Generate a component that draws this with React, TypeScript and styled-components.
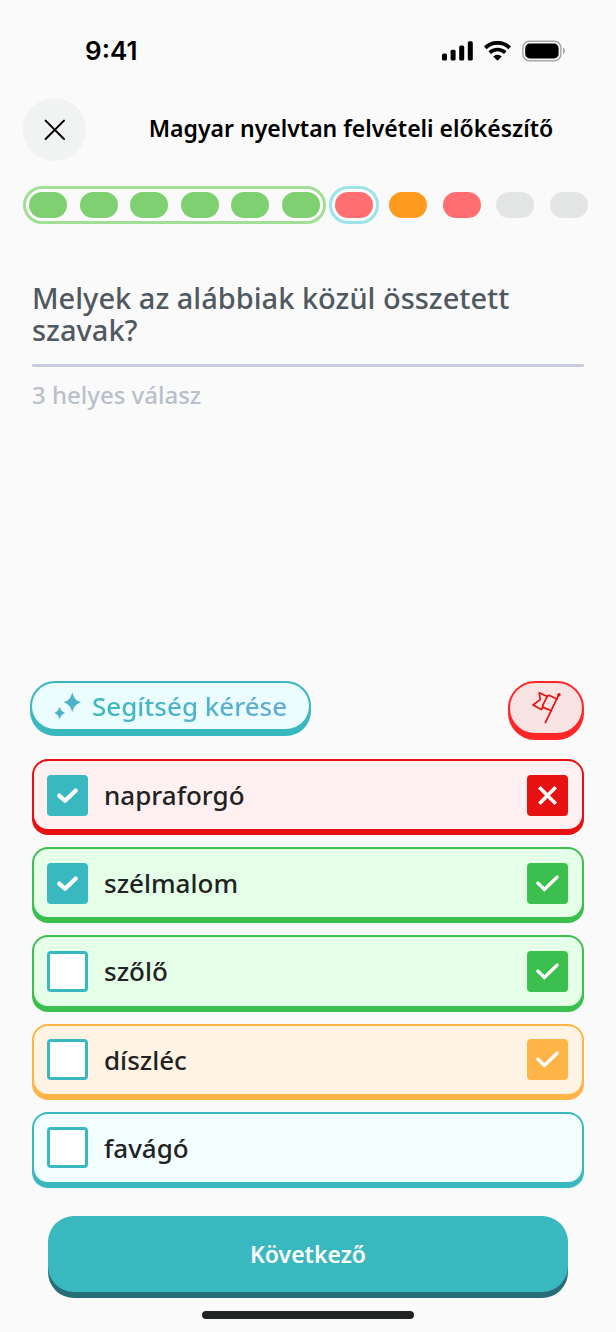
import React, { useState } from "react";
import styled, { createGlobalStyle } from "styled-components";

const GlobalStyle = createGlobalStyle`
  * { box-sizing: border-box; }
  body {
    margin: 0;
    background: #fafafa;
    color: #222;
    font-family: "Noto Sans", "Open Sans", sans-serif;
  }
  button, input { font: inherit; margin: 0; }
`;

const Screen = styled.div`
  min-height: 100vh;
  display: flex;
  flex-direction: column;
`;

const StatusBar = styled.div`
  display: flex;
  align-items: center;
  justify-content: space-between;
  height: 98px;
  padding: 4px 50px 0 85px;
`;

const Clock = styled.time`
  font-family: Inter, sans-serif;
  font-size: 26px;
  line-height: 32px;
  font-weight: 600;
  color: #000;
`;

const StatusIcons = styled.div`
  display: flex;
  align-items: center;
  gap: 11px;
`;

const Header = styled.header`
  display: flex;
  align-items: center;
  padding-left: 23px;
`;

const CloseButton = styled.button`
  display: grid;
  place-items: center;
  flex: none;
  width: 63px;
  height: 63px;
  padding: 0;
  border: 0;
  border-radius: 50%;
  background: #f0f3f2;
  color: #000;
`;

const Title = styled.h1`
  flex: 1;
  margin: 0;
  padding-bottom: 4px;
  text-align: center;
  font-size: 23px;
  line-height: 32px;
  font-weight: 600;
  color: #000;
`;

const Progress = styled.div`
  display: flex;
  align-items: center;
  padding: 25px 28px 0 23px;
`;

const PillGroup = styled.div<{ $grow: number; $gap: number; $ring?: string }>`
  display: flex;
  justify-content: space-between;
  flex: ${(p) => (p.$grow ? `${p.$grow} 1 0` : "none")};
  margin-left: ${(p) => p.$gap}px;
  padding: ${(p) => (p.$ring ? "3px" : "0")};
  border: ${(p) => (p.$ring ? `3px solid ${p.$ring}` : "0")};
  border-radius: 19px;
`;

const Pill = styled.span<{ $color: string }>`
  width: 38px;
  height: 26px;
  border-radius: 13px;
  background: ${(p) => p.$color};
`;

const Question = styled.section`
  flex: 1;
  padding: 58px 32px 24px;
`;

const QuestionText = styled.h2`
  margin: 0;
  padding-bottom: 18px;
  font-size: 29px;
  line-height: 32px;
  font-weight: 500;
  color: #505860;
`;

const Divider = styled.hr`
  height: 3px;
  margin: 0;
  border: 0;
  border-radius: 2px;
  background: #c8ccdc;
`;

const Hint = styled.p`
  margin: 12px 0 0;
  font-size: 24px;
  line-height: 32px;
  font-weight: 500;
  color: #b9c0cc;
`;

const Tools = styled.div`
  display: flex;
  align-items: flex-start;
  justify-content: space-between;
  padding: 0 32px 0 30px;
`;

const HelpButton = styled.button`
  display: flex;
  align-items: center;
  gap: 8px;
  height: 50px;
  margin-bottom: 5px;
  padding: 0 22px;
  border: 2px solid #3ab8c0;
  border-radius: 25px;
  background: #ebfdff;
  box-shadow: 0 5px 0 #3ab8c0;
  font-size: 26px;
  line-height: 32px;
  font-weight: 500;
`;

const HelpLabel = styled.span`
  background: linear-gradient(90deg, #3bb9c0, #66aad8);
  background-clip: text;
  -webkit-background-clip: text;
  color: transparent;
`;

const FlagButton = styled.button`
  display: grid;
  place-items: center;
  width: 76px;
  height: 54px;
  margin-bottom: 5px;
  padding: 0;
  border: 2px solid #ff2628;
  border-radius: 27px;
  background: #f7e3e2;
  box-shadow: 0 5px 0 #ff2628;
`;

const Options = styled.div`
  display: grid;
  grid-auto-rows: 1fr;
  gap: 16px;
  min-height: 425px;
  margin: 19px 32px 0;
`;

const OptionRow = styled.label<{ $edge: string; $fill: string }>`
  display: flex;
  align-items: center;
  gap: 16px;
  padding: 0 14px 0 13px;
  border: 2px solid ${(p) => p.$edge};
  border-radius: 16px;
  background: ${(p) => p.$fill};
  box-shadow: 0 4px 0 ${(p) => p.$edge};
`;

const OptionText = styled.span`
  flex: 1;
  font-size: 26px;
  line-height: 32px;
  font-weight: 500;
`;

const Box = styled.span`
  display: grid;
  flex: none;
  > * { grid-area: 1 / 1; }
  svg { pointer-events: none; }
`;

const Tick = styled.input`
  appearance: none;
  width: 41px;
  height: 41px;
  border: 3px solid #3ab8c0;
  border-radius: 4px;
  background: #fff;
  &:checked { background: #3ab8c0; }
`;

const Mark = styled.span<{ $color: string }>`
  display: block;
  width: 41px;
  height: 41px;
  border-radius: 4px;
  background: ${(p) => p.$color};
`;

const Footer = styled.footer`
  display: flex;
  flex-direction: column;
  align-items: center;
  gap: 19px;
  padding: 32px 48px 13px;
`;

const NextButton = styled.button`
  width: 100%;
  height: 76px;
  border: 0;
  border-radius: 26px;
  background: #3ab8c0;
  box-shadow: 0 6px 0 #276d77;
  color: #fff;
  font-size: 23px;
  line-height: 32px;
  font-weight: 600;
`;

const HomeIndicator = styled.div`
  width: 212px;
  height: 8px;
  border-radius: 4px;
  background: #222423;
`;

type Result = "wrong" | "right" | "missed" | "none";

const palette: Record<Result, { edge: string; fill: string }> = {
  wrong: { edge: "#e81111", fill: "#fff1f1" },
  right: { edge: "#3bbf4e", fill: "#e5ffe8" },
  missed: { edge: "#ffb447", fill: "#fff4e3" },
  none: { edge: "#3ab8c0", fill: "#f2feff" },
};

const answers: { text: string; checked: boolean; result: Result }[] = [
  { text: "napraforgó", checked: true, result: "wrong" },
  { text: "szélmalom", checked: true, result: "right" },
  { text: "szőlő", checked: false, result: "right" },
  { text: "díszléc", checked: false, result: "missed" },
  { text: "favágó", checked: false, result: "none" },
];

function ResultMark({ result }: { result: Result }) {
  if (result === "none") return null;
  return (
    <Mark $color={palette[result].edge}>
      <svg width="41" height="41" viewBox="0 0 41 41" fill="none" stroke="#fff" aria-hidden="true">
        {result === "wrong" ? (
          <path d="M12.3 12.3 28.7 28.7M28.7 12.3 12.3 28.7" strokeWidth="3.6" />
        ) : (
          <path d="M10.8 20 17.4 26.5 30.2 14" strokeWidth="3.2" strokeLinecap="round" />
        )}
      </svg>
    </Mark>
  );
}

function Option({ text, checked, result }: (typeof answers)[number]) {
  const [on, setOn] = useState(checked);
  return (
    <OptionRow $edge={palette[result].edge} $fill={palette[result].fill}>
      <Box>
        <Tick type="checkbox" checked={on} onChange={() => setOn(!on)} />
        {on && (
          <svg width="41" height="41" viewBox="0 0 41 41" fill="none" stroke="#fff" aria-hidden="true">
            <path d="M12.2 20.6 18 25.8 28.8 15.4" strokeWidth="4.2" strokeLinecap="round" strokeLinejoin="round" />
          </svg>
        )}
      </Box>
      <OptionText>{text}</OptionText>
      <ResultMark result={result} />
    </OptionRow>
  );
}

export default function App() {
  return (
    <Screen>
      <GlobalStyle />
      <StatusBar>
        <Clock>9:41</Clock>
        <StatusIcons>
          <svg width="31" height="20" viewBox="0 0 31 20" aria-hidden="true">
            <rect x="0" y="12.5" width="5" height="7" rx="1.6" />
            <rect x="8.6" y="8.7" width="5" height="10.8" rx="1.6" />
            <rect x="17.2" y="4.5" width="5" height="15" rx="1.6" />
            <rect x="25.8" y="0.3" width="5" height="19.2" rx="1.6" />
          </svg>
          <svg width="27" height="20" viewBox="0 0 27 20" fill="none" stroke="#000" aria-hidden="true">
            <path d="M1.3 6.8A17.4 17.4 0 0 1 25.7 6.8" strokeWidth="3.8" />
            <path d="M5.7 11.6A11.2 11.2 0 0 1 21.3 11.6" strokeWidth="3.6" />
            <path d="M13.5 19.8 9.2 15.5A6.2 6.2 0 0 1 17.8 15.5Z" fill="#000" stroke="none" />
          </svg>
          <svg width="44" height="22" viewBox="0 0 44 22" aria-hidden="true">
            <rect x="0.9" y="1.2" width="38" height="19.6" rx="6.5" fill="none" stroke="#a8a8a8" strokeWidth="1.5" />
            <rect x="3.2" y="3.6" width="33.4" height="14.8" rx="4.4" />
            <path d="M41 7.8C43.6 9 43.6 13 41 14.2Z" fill="#a8a8a8" />
          </svg>
        </StatusIcons>
      </StatusBar>

      <Header>
        <CloseButton aria-label="Bezárás">
          <svg width="22" height="22" viewBox="0 0 22 22" stroke="#000" strokeWidth="2" strokeLinecap="round" aria-hidden="true">
            <path d="M1.6 1.6 20 20M20 1.6 1.6 20" />
          </svg>
        </CloseButton>
        <Title>Magyar nyelvtan felvételi előkészítő</Title>
      </Header>

      <Progress>
        <PillGroup $grow={291} $gap={0} $ring="#a0df95">
          {[0, 1, 2, 3, 4, 5].map((i) => (
            <Pill key={i} $color="#7fd071" />
          ))}
        </PillGroup>
        <PillGroup $grow={0} $gap={3} $ring="#9be5e8">
          <Pill $color="#ff6e70" />
        </PillGroup>
        <PillGroup $grow={199} $gap={10}>
          <Pill $color="#ff9c20" />
          <Pill $color="#ff6e70" />
          <Pill $color="#e3e5e4" />
          <Pill $color="#e3e5e4" />
        </PillGroup>
      </Progress>

      <Question>
        <QuestionText>Melyek az alábbiak közül összetett szavak?</QuestionText>
        <Divider />
        <Hint>3 helyes válasz</Hint>
      </Question>

      <Tools>
        <HelpButton>
          <svg width="30" height="30" viewBox="0 0 30 30" fill="#4fb2cb" aria-hidden="true">
            <path d="M18.3 1.2C20 7.2 21.4 9 27 11.3C21.4 13.6 20 15.4 18.3 21.4C16.6 15.4 15.2 13.6 9.6 11.3C15.2 9 16.6 7.2 18.3 1.2Z" />
            <path d="M5.7 15.6C6.8 19.2 7.7 20.4 11 22C7.7 23.6 6.8 24.8 5.7 28.4C4.6 24.8 3.7 23.6 0.4 22C3.7 20.4 4.6 19.2 5.7 15.6Z" />
          </svg>
          <HelpLabel>Segítség kérése</HelpLabel>
        </HelpButton>
        <FlagButton aria-label="Hiba jelentése">
          <svg width="30" height="34" viewBox="0 0 30 34" fill="none" stroke="#e81111" strokeWidth="1.7" strokeLinejoin="round" strokeLinecap="round" aria-hidden="true">
            <path d="M27.6 4.2 14.4 31.6" />
            <circle cx="28" cy="3.8" r="0.9" fill="#e81111" />
            <path d="M26 8 18.6 4.6Q17 4 16 5.8L11.6 14.6Q11 16 12.6 16.6L20.4 19.8" />
            <path d="M16.3 5.6 8.2 1.8 9.2 8.6 2 14 10.4 18.6 12.2 16" />
          </svg>
        </FlagButton>
      </Tools>

      <Options role="group" aria-label="Válaszok">
        {answers.map((a) => (
          <Option key={a.text} {...a} />
        ))}
      </Options>

      <Footer>
        <NextButton>Következő</NextButton>
        <HomeIndicator />
      </Footer>
    </Screen>
  );
}
